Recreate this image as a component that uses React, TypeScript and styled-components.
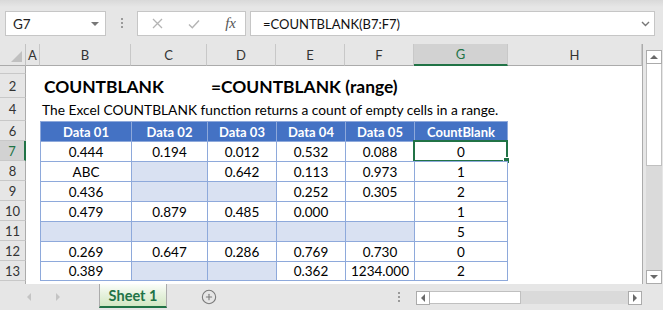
import styled, { createGlobalStyle } from "styled-components";
import { CirclePlus } from "lucide-react";

// Shared column template: row header, A..H
const COLS = "26px 14px 91px 76px 69px 69px 69px 94px 1fr";
const GREEN = "#217346";
const TABLE_LINE = "#8ea9db";

const GlobalStyle = createGlobalStyle`
  html, body {
    margin: 0;
    padding: 0;
    background: #e6e6e6;
    overflow: hidden;
  }
  body {
    font-family: Lato, "Liberation Sans", sans-serif;
  }
`;

const Frame = styled.div`
  width: 663px;
  height: 310px;
  display: flex;
  flex-direction: column;
  background: #e6e6e6;
`;

/* ---------- formula bar ---------- */

const FormulaBar = styled.div`
  height: 44px;
  box-sizing: border-box;
  display: flex;
  align-items: center;
  padding: 3px 8px 0 5px;
  background: linear-gradient(#d9d9d9 0, #e6e6e6 7px);
`;

const InputBox = styled.div<{ $width?: number }>`
  height: 25px;
  box-sizing: border-box;
  background: #fff;
  border: 1px solid #c6c6c6;
  display: flex;
  align-items: center;
  ${(p) => (p.$width ? `width: ${p.$width}px;` : "flex: 1;")}
`;

const NameText = styled.span`
  flex: 1;
  padding-left: 7px;
  font-size: 13.5px;
  color: #222;
`;

const DropTriangle = styled.span`
  width: 0;
  height: 0;
  margin-right: 6px;
  border-left: 4px solid transparent;
  border-right: 4px solid transparent;
  border-top: 4px solid #777;
`;

const VDots = styled.div`
  width: 2px;
  height: 11px;
  background-image: linear-gradient(#9a9a9a 50%, transparent 50%);
  background-size: 2px 4px;
`;

const BarDots = styled(VDots)`
  margin: 0 14px 0 15px;
`;

const FxIcons = styled.div`
  flex: 1;
  display: flex;
  align-items: center;
  justify-content: space-between;
  padding: 0 9px 0 14px;
`;

const FxText = styled.span`
  font-family: "Liberation Serif", serif;
  font-style: italic;
  font-size: 15px;
  color: #555;
`;

const FormulaText = styled.span`
  flex: 1;
  padding-left: 12px;
  font-size: 13px;
  color: #111;
`;

/* ---------- sheet ---------- */

const Body = styled.div`
  height: 240px;
  display: flex;
`;

const Sheet = styled.div`
  width: 643px;
  box-sizing: border-box;
  border-right: 1px solid #ababab;
  background: #fff;
  display: flex;
  flex-direction: column;
  overflow: hidden;
`;

const SheetRow = styled.div<{ $h: number }>`
  display: grid;
  grid-template-columns: ${COLS};
  height: ${(p) => p.$h}px;
  flex: none;
`;

const Corner = styled.div`
  background: #e6e6e6;
  border-right: 1px solid #c2c2c2;
  border-bottom: 1px solid #ababab;
  position: relative;
  &::after {
    content: "";
    position: absolute;
    right: 3px;
    bottom: 3px;
    border-left: 11px solid transparent;
    border-bottom: 11px solid #c0c0c0;
  }
`;

const ColHead = styled.div<{ $active?: boolean }>`
  background: ${(p) => (p.$active ? "#d2d2d2" : "#e6e6e6")};
  color: ${(p) => (p.$active ? GREEN : "#333")};
  border-right: 1px solid #c8c8c8;
  border-bottom: ${(p) => (p.$active ? `2px solid ${GREEN}` : "1px solid #ababab")};
  display: flex;
  align-items: center;
  justify-content: center;
  font-size: 13px;
`;

const RowHead = styled.div<{ $active?: boolean }>`
  background: ${(p) => (p.$active ? "#d2d2d2" : "#e6e6e6")};
  color: ${(p) => (p.$active ? GREEN : "#333")};
  border-bottom: 1px solid #c8c8c8;
  border-right: ${(p) => (p.$active ? `2px solid ${GREEN}` : "1px solid #ababab")};
  display: flex;
  align-items: center;
  justify-content: center;
  font-size: 13px;
  overflow: hidden;
`;

const Empty = styled.div``;

const Title = styled.div<{ $span: number }>`
  grid-column: span ${(p) => p.$span};
  display: flex;
  align-items: center;
  padding-left: 4px;
  font-size: 17.4px;
  font-weight: 700;
  color: #000;
  white-space: nowrap;
`;

const Desc = styled.div`
  grid-column: span 7;
  display: flex;
  align-items: center;
  padding-left: 2px;
  font-size: 13.75px;
  color: #000;
  white-space: nowrap;
`;

type Kind = "head" | "blank" | "value";

const TCell = styled.div<{ $kind: Kind; $lastCol?: boolean; $lastRow?: boolean }>`
  position: relative;
  display: flex;
  align-items: center;
  justify-content: center;
  font-size: ${(p) => (p.$kind === "head" ? 13 : 13.5)}px;
  border-left: 1px solid ${TABLE_LINE};
  border-top: 1px solid ${TABLE_LINE};
  border-right: ${(p) => (p.$lastCol ? `1px solid ${TABLE_LINE}` : "none")};
  border-bottom: ${(p) => (p.$lastRow ? `1px solid ${TABLE_LINE}` : "none")};
  background: ${(p) => (p.$kind === "head" ? "#4472c4" : p.$kind === "blank" ? "#d9e1f2" : "#fff")};
  color: ${(p) => (p.$kind === "head" ? "#fff" : "#000")};
  font-weight: ${(p) => (p.$kind === "head" ? 700 : 400)};
`;

const Selection = styled.div`
  position: absolute;
  left: -2px;
  top: -2px;
  right: -1px;
  bottom: -1px;
  border: 2px solid ${GREEN};
  pointer-events: none;
  &::after {
    content: "";
    position: absolute;
    right: -4px;
    bottom: -4px;
    width: 5px;
    height: 5px;
    background: ${GREEN};
    border: 1px solid #fff;
  }
`;

/* ---------- scrollbars ---------- */

const VScroll = styled.div`
  width: 20px;
  display: flex;
  flex-direction: column;
  padding: 6px 1px 0 3px;
  box-sizing: border-box;
  background: #e6e6e6;
`;

const ScrollBtn = styled.div<{ $size: number }>`
  flex: none;
  width: ${(p) => p.$size}px;
  height: 14px;
  box-sizing: border-box;
  background: #fff;
  border: 1px solid #ababab;
  display: flex;
  align-items: center;
  justify-content: center;
`;

const VThumb = styled.div`
  height: 102px;
  background: #fff;
  border: 1px solid #c0c0c0;
  border-top: none;
  box-sizing: border-box;
`;

const VTrack = styled.div`
  flex: 1;
  background: #dadada;
`;

const Arrow = styled.span<{ $dir: "up" | "down" | "left" | "right"; $color?: string }>`
  width: 0;
  height: 0;
  ${(p) => {
    const c = p.$color || "#6a6a6a";
    switch (p.$dir) {
      case "up":
        return `border-left:4px solid transparent;border-right:4px solid transparent;border-bottom:4px solid ${c};`;
      case "down":
        return `border-left:4px solid transparent;border-right:4px solid transparent;border-top:4px solid ${c};`;
      case "left":
        return `border-top:4px solid transparent;border-bottom:4px solid transparent;border-right:4px solid ${c};`;
      default:
        return `border-top:4px solid transparent;border-bottom:4px solid transparent;border-left:4px solid ${c};`;
    }
  }}
`;

/* ---------- tab bar ---------- */

const TabBar = styled.div`
  height: 26px;
  display: flex;
  align-items: center;
`;

const NavArrow = styled.div<{ $gap: number }>`
  margin-left: ${(p) => p.$gap}px;
  display: flex;
`;

const SheetTab = styled.div`
  align-self: flex-start;
  margin-left: 39px;
  width: 68px;
  height: 24px;
  box-sizing: border-box;
  border-left: 1px solid #ababab;
  border-right: 1px solid #ababab;
  border-bottom: 2px solid ${GREEN};
  background: linear-gradient(#fbfdf9 0%, #e7f2df 45%, #d3e8c4 100%);
  display: flex;
  align-items: center;
  justify-content: center;
  font-size: 14.5px;
  font-weight: 700;
  color: ${GREEN};
`;

const AddSheet = styled.div`
  margin-left: 34px;
  display: flex;
  color: #7a7a7a;
`;

const TabDots = styled(VDots)`
  margin-left: 181px;
`;

const HScroll = styled.div`
  margin-left: 16px;
  width: 226px;
  height: 13px;
  display: flex;
`;

const HThumb = styled.div`
  width: 91px;
  background: #fff;
  border: 1px solid #c0c0c0;
  border-left: none;
  box-sizing: border-box;
`;

const HTrack = styled.div`
  flex: 1;
  background: #dadada;
`;

/* ---------- data ---------- */

const letters = ["A", "B", "C", "D", "E", "F", "G", "H"];
const heads = ["Data 01", "Data 02", "Data 03", "Data 04", "Data 05", "CountBlank"];

// null = empty input cell (shaded), "" = empty formula result (white)
const data: { n: number; cells: (string | null)[] }[] = [
  { n: 7, cells: ["0.444", "0.194", "0.012", "0.532", "0.088", "0"] },
  { n: 8, cells: ["ABC", null, "0.642", "0.113", "0.973", "1"] },
  { n: 9, cells: ["0.436", null, null, "0.252", "0.305", "2"] },
  { n: 10, cells: ["0.479", "0.879", "0.485", "0.000", "", "1"] },
  { n: 11, cells: [null, null, null, null, null, "5"] },
  { n: 12, cells: ["0.269", "0.647", "0.286", "0.769", "0.730", "0"] },
  { n: 13, cells: ["0.389", null, null, "0.362", "1234.000", "2"] },
];

const XIcon = () => (
  <svg width="11" height="11" viewBox="0 0 11 11">
    <path d="M1 1L10 10M10 1L1 10" stroke="#b4b4b4" strokeWidth="1.3" fill="none" />
  </svg>
);

const CheckIcon = () => (
  <svg width="12" height="10" viewBox="0 0 12 10">
    <path d="M1 5.5L4.3 8.7L11 1.5" stroke="#b4b4b4" strokeWidth="1.4" fill="none" />
  </svg>
);

const Chevron = () => (
  <svg width="9" height="6" viewBox="0 0 9 6" style={{ marginRight: 4 }}>
    <path d="M1 1L4.5 4.5L8 1" stroke="#777" strokeWidth="1.4" fill="none" />
  </svg>
);

export default function App() {
  return (
    <Frame>
      <GlobalStyle />
      <FormulaBar>
        <InputBox $width={101}>
          <NameText>G7</NameText>
          <DropTriangle />
        </InputBox>
        <BarDots />
        <InputBox $width={109}>
          <FxIcons>
            <XIcon />
            <CheckIcon />
            <FxText>fx</FxText>
          </FxIcons>
        </InputBox>
        <InputBox style={{ marginLeft: 4 }}>
          <FormulaText>=COUNTBLANK(B7:F7)</FormulaText>
          <Chevron />
        </InputBox>
      </FormulaBar>

      <Body>
        <Sheet>
          <SheetRow $h={22}>
            <Corner />
            {letters.map((l) => (
              <ColHead key={l} $active={l === "G"}>
                {l}
              </ColHead>
            ))}
          </SheetRow>

          <SheetRow $h={8}>
            <RowHead />
          </SheetRow>

          <SheetRow $h={24}>
            <RowHead>2</RowHead>
            <Empty />
            <Title $span={2}>COUNTBLANK</Title>
            <Title $span={5}>=COUNTBLANK (range)</Title>
          </SheetRow>

          <SheetRow $h={23}>
            <RowHead>4</RowHead>
            <Empty />
            <Desc>The Excel COUNTBLANK function returns a count of empty cells in a range.</Desc>
          </SheetRow>

          <SheetRow $h={20}>
            <RowHead>6</RowHead>
            <Empty />
            {heads.map((h, i) => (
              <TCell key={h} $kind="head" $lastCol={i === heads.length - 1}>
                {h}
              </TCell>
            ))}
          </SheetRow>

          {data.map((row, r) => (
            <SheetRow key={row.n} $h={20}>
              <RowHead $active={row.n === 7}>{row.n}</RowHead>
              <Empty />
              {row.cells.map((c, i) => (
                <TCell
                  key={i}
                  $kind={c === null ? "blank" : "value"}
                  $lastCol={i === row.cells.length - 1}
                  $lastRow={r === data.length - 1}
                >
                  {c}
                  {row.n === 7 && i === 5 && <Selection />}
                </TCell>
              ))}
            </SheetRow>
          ))}

          <SheetRow $h={10}>
            <RowHead />
          </SheetRow>
        </Sheet>

        <VScroll>
          <ScrollBtn $size={16}>
            <Arrow $dir="up" />
          </ScrollBtn>
          <VThumb />
          <VTrack />
          <ScrollBtn $size={16}>
            <Arrow $dir="down" />
          </ScrollBtn>
        </VScroll>
      </Body>

      <TabBar>
        <NavArrow $gap={27}>
          <Arrow $dir="left" $color="#c4c4c4" />
        </NavArrow>
        <NavArrow $gap={25}>
          <Arrow $dir="right" $color="#c4c4c4" />
        </NavArrow>
        <SheetTab>Sheet 1</SheetTab>
        <AddSheet>
          <CirclePlus size={16} strokeWidth={1.6} />
        </AddSheet>
        <TabDots />
        <HScroll>
          <ScrollBtn $size={14}>
            <Arrow $dir="left" />
          </ScrollBtn>
          <HThumb />
          <HTrack />
          <ScrollBtn $size={14}>
            <Arrow $dir="right" />
          </ScrollBtn>
        </HScroll>
      </TabBar>
    </Frame>
  );
}
